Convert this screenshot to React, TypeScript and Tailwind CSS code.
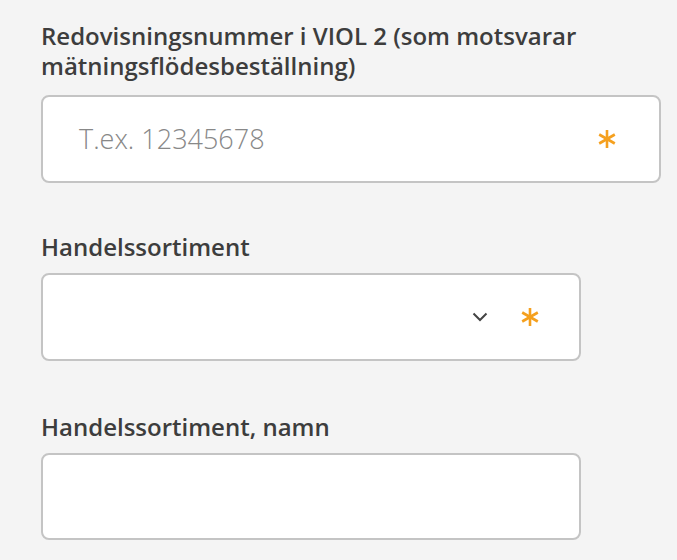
const font = { fontFamily: '"Open Sans", "Noto Sans", Arial, sans-serif' };

function Asterisk() {
  return (
    <svg width="20" height="20" viewBox="0 0 20 20" className="shrink-0">
      <g stroke="#f5a01e" strokeWidth="2.6" strokeLinecap="butt">
        <line x1="10" y1="1" x2="10" y2="19" />
        <line x1="2.2" y1="5.5" x2="17.8" y2="14.5" />
        <line x1="2.2" y1="14.5" x2="17.8" y2="5.5" />
      </g>
    </svg>
  );
}

function Chevron() {
  return (
    <svg width="16" height="10" viewBox="0 0 16 10" className="shrink-0">
      <polyline points="1.5,1.5 8,8 14.5,1.5" fill="none" stroke="#444" strokeWidth="2" />
    </svg>
  );
}

function Label({ children, className = 'leading-[28px] mb-[12px]' }: { children: React.ReactNode; className?: string }) {
  return (
    <label className={`block text-[24px] font-semibold text-[#3d3d3d] ${className}`}>
      {children}
    </label>
  );
}

export default function App() {
  return (
    <div className="min-h-[560px] bg-[#f4f4f4] pl-[41px] pt-[21px]" style={font}>
      <div className="w-[620px]">
        <Label className="leading-[30px] mb-[14px]">
          Redovisningsnummer i VIOL 2 (som motsvarar
          <br />
          mätningsflödesbeställning)
        </Label>
        <div className="h-[88px] w-[620px] bg-white border-2 border-[#c4c4c4] rounded-lg flex items-center pl-[36px] pr-[42px]">
          <span className="flex-1 text-[27px] font-light text-[#888888]">T.ex. 12345678</span>
          <Asterisk />
        </div>
      </div>

      <div className="mt-[50px]">
        <Label>Handelssortiment</Label>
        <div className="h-[88px] w-[540px] bg-white border-2 border-[#c4c4c4] rounded-lg flex items-center justify-end pr-[39px] gap-[32px]">
          <Chevron />
          <Asterisk />
        </div>
      </div>

      <div className="mt-[52px]">
        <Label>Handelssortiment, namn</Label>
        <div className="h-[87px] w-[540px] bg-white border-2 border-[#c4c4c4] rounded-lg" />
      </div>
    </div>
  );
}
